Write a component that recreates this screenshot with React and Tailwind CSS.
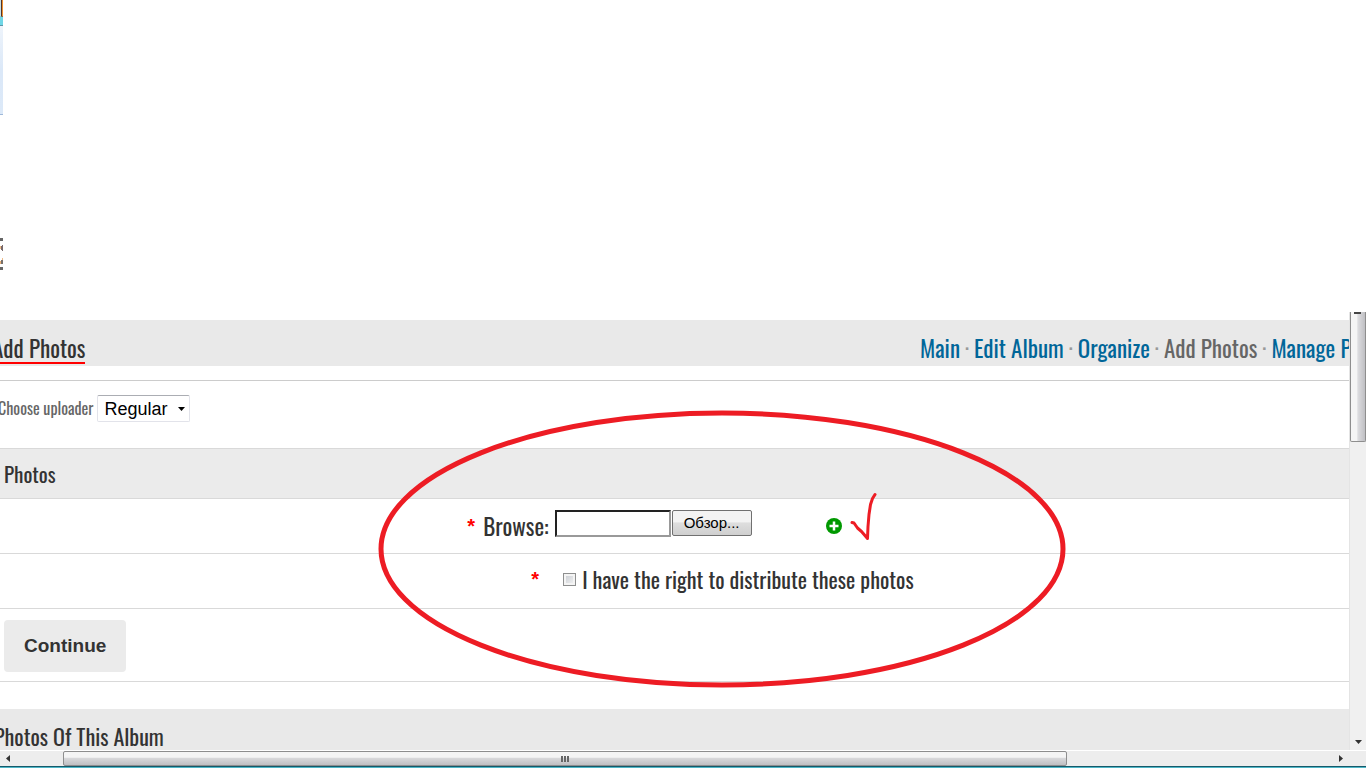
import React, { useState } from "react";

const condensed = "font-['Oswald','Liberation_Sans_Narrow','Roboto_Condensed',sans-serif]";

const albumLinks = [
    { label: "Main" },
    { label: "Edit Album" },
    { label: "Organize" },
    { label: "Add Photos", current: true },
    { label: "Manage Photos" },
];

const TopStrip = () => (
    <header className="h-78 shrink-0">
        {/* Edge of the neighbouring window */}
        <svg width="3" height="312" viewBox="0 0 3 312" shapeRendering="crispEdges" aria-hidden="true">
            <defs>
                <linearGradient id="edge" x1="0" y1="0" x2="0" y2="1">
                    <stop offset="0" stopColor="#eef4fb" />
                    <stop offset="0.5" stopColor="#dbe8f8" />
                    <stop offset="1" stopColor="#dce9f8" />
                </linearGradient>
            </defs>
            <rect width="3" height="25" fill="#6fd6e6" />
            <rect width="1" height="16" fill="#c9dfe4" />
            <rect x="1" width="1" height="16" fill="#51342a" />
            <rect x="2" width="1" height="17" fill="#f0922f" />
            <rect x="1" y="16" width="2" height="1" fill="#8a6a50" />
            <rect y="25" width="3" height="1" fill="#5d96a8" />
            <rect y="26" width="3" height="88" fill="url(#edge)" />
            <rect y="114" width="3" height="1" fill="#9fb9d9" />
            <rect y="238" width="3" height="3" fill="#666666" />
            <path d="M0 247h1v-1h1v-1h1v6h-1v-1h-1v-1h-1z" fill="#77686a" />
            <rect y="246" width="1" height="3" fill="#eebb88" />
            <path d="M0 264v-2h1v-2h1v-2h1v6z" fill="#77706c" />
            <rect x="2" y="258" width="1" height="2" fill="#eebb88" />
            <rect y="261" width="1" height="3" fill="#e8b078" />
            <rect y="267" width="3" height="3" fill="#666666" />
        </svg>
    </header>
);

const AlbumNav = () => (
    <nav className="flex shrink-0 -mr-12">
        {albumLinks.map((link, index) => (
            <span key={link.label} className="whitespace-nowrap">
                {index > 0 && <span className="px-[5px] text-[#999]">·</span>}
                <a href="#" className={link.current ? "text-[#666]" : "text-[#069]"}>
                    {link.label}
                </a>
            </span>
        ))}
    </nav>
);

const Annotation = () => (
    <svg
        className="absolute top-[98px] left-[378px] pointer-events-none"
        width="690"
        height="278"
        viewBox="378 410 690 278"
        fill="none"
        stroke="#ed1c24"
        strokeLinecap="round"
        strokeLinejoin="round"
        aria-hidden="true"
    >
        <ellipse cx="722" cy="549" rx="341" ry="136" strokeWidth="5" />
        <path
            d="M852 522.5l2 .5 3.500 5 4 3.500 6 7 .5-12 1-12 1.500-10 2-6 2.500-4"
            strokeWidth="3"
        />
    </svg>
);

const VerticalScrollbar = () => (
    <div className="w-[17px] shrink-0 flex flex-col bg-[#f0f0f0] border-l border-[#e4e4e4]">
        <div className="flex-[130] flex justify-center border border-t-0 border-[#8e8e8e] rounded-b-xs bg-linear-to-r from-[#f5f5f5] from-40% via-[#dcdcdf] via-50% to-[#bfbfc3]">
            <svg width="8" height="2" aria-hidden="true">
                <path d="M0 1h7" stroke="#444" strokeWidth="2" />
            </svg>
        </div>
        <div className="flex-[292]" />
        <svg className="mx-auto" width="7" height="17" viewBox="0 0 7 17" aria-hidden="true">
            <path d="M0 7h7l-3.500 4z" fill="#333" />
        </svg>
    </div>
);

const HorizontalScrollbar = () => (
    <div className="h-4 shrink-0 flex bg-[#ededed] border-t border-white">
        <svg width="17" height="15" viewBox="0 0 17 15" aria-hidden="true">
            <path d="M10 4v7l-4-3.500z" fill="#333" />
        </svg>
        <div className="flex-[46]" />
        <div className="flex-[1004] flex items-center justify-center gap-px border border-[#8e8e8e] rounded-xs bg-linear-to-b from-[#f5f5f5] from-40% via-[#d8d8da] via-50% to-[#bfbfc3]">
            <span className="w-0.5 h-1.5 bg-[#666]" />
            <span className="w-0.5 h-1.5 bg-[#666]" />
            <span className="w-0.5 h-1.5 bg-[#666]" />
        </div>
        <div className="flex-[265]" />
        <svg width="17" height="15" viewBox="0 0 17 15" aria-hidden="true">
            <path d="M7 4v7l4-3.500z" fill="#333" />
        </svg>
        <div className="w-[17px]" />
    </div>
);

const UploadForm = () => {
    const [file, setFile] = useState("");
    const [accepted, setAccepted] = useState(false);

    return (
        <form onSubmit={(e) => e.preventDefault()}>
            <h3 className="h-[51px] flex items-center pl-1 border-y border-[#d9d9d9] bg-[#ebebeb] text-[21px]">
                Photos
            </h3>

            {/* File row */}
            <div className="h-[55px] flex items-center justify-center pr-10 border-b border-[#d9d9d9]">
                <span className="mr-2 font-['Liberation_Sans',sans-serif] text-[20px] font-bold text-[#f00]">*</span>
                <label htmlFor="file" className="mr-1.5 text-[23px]">
                    Browse:
                </label>
                <div className="flex items-start mb-1.5">
                    <input
                        id="file"
                        type="text"
                        value={file}
                        onChange={(e) => setFile(e.target.value)}
                        className="w-[116px] h-[27px] mr-px px-1 border-2 border-t-[#222] border-l-[#222] border-r-[#999] border-b-[#999] text-base"
                    />
                    <button
                        type="button"
                        className="w-20 h-[26px] border border-[#707070] rounded-xs bg-linear-to-b from-[#f3f3f3] from-45% via-[#dedede] via-50% to-[#cfcfcf] font-['Liberation_Sans',sans-serif] text-[15px] leading-none text-black"
                    >
                        Обзор...
                    </button>
                </div>
                <button type="button" aria-label="Add" className="ml-[74px]">
                    <svg width="16" height="16" viewBox="0 0 16 16" aria-hidden="true">
                        <circle cx="8" cy="8" r="8" fill="#090" />
                        <path d="M8 3.500v9M3.500 8h9" stroke="#fff" strokeWidth="2.500" />
                    </svg>
                </button>
            </div>

            {/* Rights row */}
            <div className="h-[55px] flex items-center justify-center pl-24 pb-1 border-b border-[#d9d9d9]">
                <span className="mr-6 font-['Liberation_Sans',sans-serif] text-[20px] font-bold text-[#f00]">*</span>
                <input
                    id="rights"
                    type="checkbox"
                    checked={accepted}
                    onChange={(e) => setAccepted(e.target.checked)}
                    className="appearance-none size-[13px] mr-1.5 border border-[#8e8f8f] bg-linear-to-br from-[#c5c9cf] to-[#f6f6f6] shadow-[inset_0_0_0_2px_#f4f4f4] checked:bg-[#4b6a9b]"
                />
                <label htmlFor="rights" className="text-[22px]">
                    I have the right to distribute these photos
                </label>
            </div>

            <div className="h-[73px] px-1 pt-[11px] border-b border-[#d9d9d9]">
                <button
                    type="submit"
                    className="h-[52px] px-5 rounded bg-[#ebebeb] font-['Liberation_Sans',sans-serif] text-[19px] font-bold text-[#333]"
                >
                    Continue
                </button>
            </div>
        </form>
    );
};

const App = () => {
    const [uploader, setUploader] = useState("regular");

    return (
        <div className={`h-screen flex flex-col overflow-hidden bg-white text-[#333] ${condensed}`}>
            <TopStrip />
            <div className="flex-1 min-h-0 flex">
                <main className="relative flex-1 min-w-0 overflow-hidden pt-2">
                    <div className="h-[46px] flex justify-between bg-[#e9e9e9] text-[23px] leading-9">
                        <h2 className="h-11 -ml-2 pt-2.5 border-b-2 border-[#f00] whitespace-nowrap">
                            Add Photos
                        </h2>
                        <div className="pt-2.5">
                            <AlbumNav />
                        </div>
                    </div>

                    <div className="h-[68px] mt-3.5 pt-3.5 flex items-start border-t border-[#ccc]">
                        <label htmlFor="uploader" className="-ml-0.5 mr-1 text-base leading-[27px] text-[#666]">
                            Choose uploader
                        </label>
                        <span className="relative">
                            <select
                                id="uploader"
                                value={uploader}
                                onChange={(e) => setUploader(e.target.value)}
                                className="appearance-none w-[93px] h-[27px] px-1.5 border border-[#e2e3ea] border-t-[#abadb3] rounded-xs bg-white font-['Liberation_Sans',sans-serif] text-[18px] leading-6 text-black"
                            >
                                <option value="regular">Regular</option>
                            </select>
                            <svg
                                className="absolute right-1 top-3 pointer-events-none"
                                width="9"
                                height="5"
                                viewBox="0 0 9 5"
                                aria-hidden="true"
                            >
                                <path d="M1 0h7l-3.500 4z" fill="#000" />
                            </svg>
                        </span>
                    </div>

                    <UploadForm />

                    <h2 className="h-[46px] mt-[27px] -ml-1.5 pt-2.5 bg-[#e9e9e9] text-[22px] leading-[34px]">
                        Photos Of This Album
                    </h2>

                    <Annotation />
                </main>
                <VerticalScrollbar />
            </div>
            <HorizontalScrollbar />
            <div className="h-0.5 shrink-0 border-t border-[#15596a] bg-[#4fb6c6]" />
        </div>
    );
};

export default App;
